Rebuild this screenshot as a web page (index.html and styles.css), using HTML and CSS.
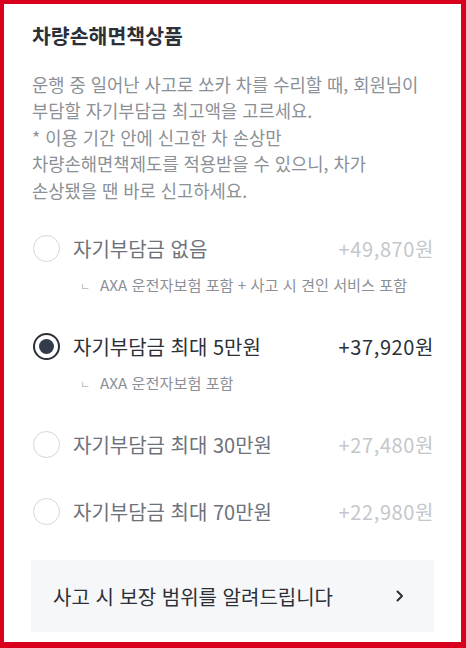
FILE: index.html
```html
<!DOCTYPE html>
<html lang="ko">
<head>
    <meta charset="UTF-8">
    <meta name="viewport" content="width=device-width, initial-scale=1.0">
    <title>차량손해면책상품</title>
    <link rel="stylesheet" href="styles.css">
</head>
<body>
    <div class="frame">
        <div class="content">
            <h1 class="title">차량손해면책상품</h1>
            <p class="desc">
                운행 중 일어난 사고로 쏘카 차를 수리할 때, 회원님이<br>
                부담할 자기부담금 최고액을 고르세요.<br>
                * 이용 기간 안에 신고한 차 손상만<br>
                차량손해면책제도를 적용받을 수 있으니, 차가<br>
                손상됐을 땐 바로 신고하세요.
            </p>

            <ul class="options">
                <li class="option">
                    <div class="option-row">
                        <span class="radio"></span>
                        <span class="option-label">자기부담금 없음</span>
                        <span class="option-price">+49,870원</span>
                    </div>
                    <div class="option-sub"><span class="sub-mark">ㄴ</span>AXA 운전자보험 포함 + 사고 시 견인 서비스 포함</div>
                </li>
                <li class="option selected">
                    <div class="option-row">
                        <span class="radio"></span>
                        <span class="option-label">자기부담금 최대 5만원</span>
                        <span class="option-price">+37,920원</span>
                    </div>
                    <div class="option-sub"><span class="sub-mark">ㄴ</span>AXA 운전자보험 포함</div>
                </li>
                <li class="option">
                    <div class="option-row">
                        <span class="radio"></span>
                        <span class="option-label">자기부담금 최대 30만원</span>
                        <span class="option-price">+27,480원</span>
                    </div>
                </li>
                <li class="option">
                    <div class="option-row">
                        <span class="radio"></span>
                        <span class="option-label">자기부담금 최대 70만원</span>
                        <span class="option-price">+22,980원</span>
                    </div>
                </li>
            </ul>

            <a href="#" class="coverage-link">
                <span>사고 시 보장 범위를 알려드립니다</span>
                <svg class="chevron" width="8" height="12" viewBox="0 0 8 12">
                    <path d="M1.5 1.5 L6 6 L1.5 10.5" fill="none" stroke="#2c3038" stroke-width="2" stroke-linecap="round" stroke-linejoin="round"/>
                </svg>
            </a>
        </div>
    </div>
</body>
</html>
```

FILE: styles.css
```css
:root {
    --frame-color: #d8001c;
    --text-dark: #2c3038;
    --text-gray: #8b9096;
    --text-mid: #6d727a;
    --text-light: #c4c7cb;
    --radio-border: #d3d6d9;
    --radio-fill: #323b49;
    --box-bg: #f6f7f9;
}
* {
    box-sizing: border-box;
}
body {
    margin: 0;
    padding: 0;
    font-family: "Noto Sans CJK KR", "Noto Sans", sans-serif;
    color: var(--text-dark);
    background: white;
}
.frame {
    width: 466px;
    height: 648px;
    border-style: solid;
    border-color: var(--frame-color);
    border-width: 4px 5px 6px 4px;
    background: white;
    overflow: hidden;
}
.content {
    padding: 17px 27px 0 28px;
}
.title {
    margin: 0;
    font-size: 20.5px;
    line-height: 28px;
    font-weight: 700;
    color: var(--text-dark);
}
.desc {
    margin: 22px 0 0;
    font-size: 17.7px;
    line-height: 26.4px;
    color: var(--text-gray);
}
.options {
    list-style: none;
    margin: 12px 0 0;
    padding: 0;
}
.option {
    padding: 19px 0 20px;
}
.option-row {
    display: flex;
    align-items: center;
    height: 28px;
}
.radio {
    width: 27px;
    height: 27px;
    border-radius: 50%;
    border: 1.5px solid var(--radio-border);
    margin-left: 1px;
    flex-shrink: 0;
}
.option-label {
    margin-left: 13px;
    font-size: 20px;
    color: var(--text-mid);
    flex: 1;
}
.option-price {
    font-size: 20px;
    letter-spacing: 0.6px;
    color: var(--text-light);
}
.option-sub {
    margin-top: 15px;
    padding-left: 48px;
    font-size: 15.2px;
    line-height: 14px;
    color: var(--text-gray);
}
.sub-mark {
    display: inline-block;
    width: 20px;
    font-size: 11px;
    color: #b5b9be;
}
.option.selected .radio {
    border: 2px solid var(--text-dark);
    display: flex;
    align-items: center;
    justify-content: center;
}
.option.selected .radio::after {
    content: "";
    width: 15px;
    height: 15px;
    border-radius: 50%;
    background: var(--radio-fill);
}
.option.selected .option-label,
.option.selected .option-price {
    color: var(--text-dark);
}
.coverage-link {
    display: flex;
    align-items: center;
    justify-content: space-between;
    height: 72px;
    margin: 15px 0 0 -1px;
    padding: 0 30px 0 22px;
    background: var(--box-bg);
    text-decoration: none;
    font-size: 20px;
    color: var(--text-dark);
}
.chevron {
    display: block;
}
```
